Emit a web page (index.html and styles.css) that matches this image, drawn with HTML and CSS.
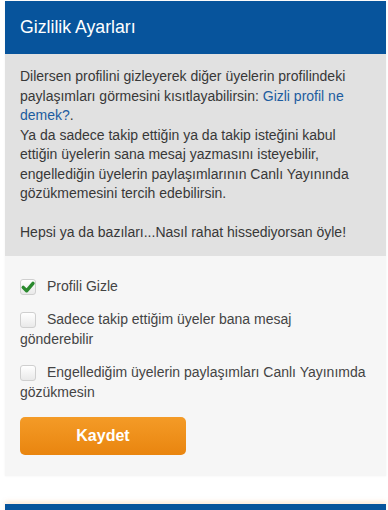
FILE: index.html
```html
<!DOCTYPE html>
<html lang="tr">
<head>
<meta charset="utf-8">
<link rel="stylesheet" href="styles.css">
</head>
<body>
<div class="card">
  <div class="card-head"><h2 class="title">Gizlilik Ayarları</h2></div>
  <div class="info">
    Dilersen profilini gizleyerek diğer üyelerin profilindeki paylaşımları görmesini kısıtlayabilirsin: <a class="link" href="#">Gizli profil ne demek?</a>.<br>
    Ya da sadece takip ettiğin ya da takip isteğini kabul ettiğin üyelerin sana mesaj yazmasını isteyebilir, engellediğin üyelerin paylaşımlarının Canlı Yayınında gözükmemesini tercih edebilirsin.<br><br>
    Hepsi ya da bazıları...Nasıl rahat hissediyorsan öyle!
  </div>
  <div class="form">
    <label class="opt"><span class="box"><svg viewBox="0 0 16 16" width="16" height="16"><path d="M3.2 8.4 L6.6 11.8 L13 4.4" fill="none" stroke="#2a8a2e" stroke-width="3.4" stroke-linecap="round" stroke-linejoin="round"/></svg></span>Profili Gizle</label>
    <label class="opt"><span class="box"></span>Sadece takip ettiğim üyeler bana mesaj gönderebilir</label>
    <label class="opt"><span class="box"></span>Engellediğim üyelerin paylaşımları Canlı Yayınımda gözükmesin</label>
    <button class="save" type="button">Kaydet</button>
  </div>
</div>
<div class="card next">
  <div class="card-head"></div>
</div>
</body>
</html>
```
FILE: styles.css
```css
html, body {
  margin: 0;
  padding: 0;
  background: #ffffff;
}
body {
  padding: 1px 2px 0 5px;
  font-family: "Liberation Sans", Arial, sans-serif;
}
.card {
  width: 381px;
  box-shadow: 0 0 2px rgba(0,0,0,0.06);
}
.card-head {
  background: #07549c;
  height: 53px;
  display: flex;
  align-items: center;
  padding: 0 15px;
}
.title {
  margin: 0;
  color: #ffffff;
  font-size: 17.7px;
  font-weight: normal;
}
.info {
  background: #e1e1e1;
  padding: 13px 15px 13px 15px;
  font-size: 14px;
  line-height: 19.5px;
  color: #383838;
}
.link {
  color: #1c5c9f;
  text-decoration: none;
}
.form {
  background: #f6f6f6;
  padding: 21px 20px 21px 15px;
  display: flex;
  flex-direction: column;
  align-items: flex-start;
}
.opt {
  display: block;
  font-size: 14px;
  line-height: 19.5px;
  color: #444;
  margin-bottom: 14px;
}
.box {
  display: inline-block;
  vertical-align: -4px;
  width: 14px;
  height: 14px;
  border: 1px solid #cfcfcf;
  border-radius: 3px;
  background: linear-gradient(#ffffff, #e9e9e9);
  margin: 0 11px 0 0;
  position: relative;
}
.box svg {
  position: absolute;
  left: -1px;
  top: -1px;
}
.save {
  margin-top: 1px;
  width: 166px;
  height: 38px;
  border: none;
  border-radius: 5px;
  background: linear-gradient(#f49b27, #e9850f);
  color: #ffffff;
  font-family: "Liberation Sans", Arial, sans-serif;
  font-size: 16px;
  font-weight: bold;
}
.next {
  margin-top: 28px;
  box-shadow: 0 -3px 4px rgba(243, 176, 120, 0.25);
}
```
